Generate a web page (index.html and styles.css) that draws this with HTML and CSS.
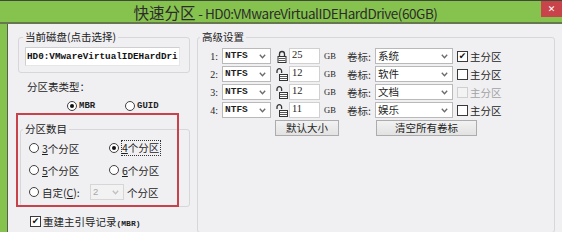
FILE: index.html
```html
<!DOCTYPE html>
<html lang="zh-CN">
<head>
<meta charset="utf-8">
<title>快速分区</title>
<link rel="stylesheet" href="styles.css">
</head>
<body>
<div class="window">
  <div class="titlebar">
    <div class="title"><span class="t-cjk">快速分区</span><span class="t-lat"> - HD0:VMwareVirtualIDEHardDrive(60GB)</span></div>
    <div class="close">&#x2715;</div>
  </div>
  <div class="frame">
    <div class="left">
      <fieldset class="group disk">
        <legend>当前磁盘(点击选择)</legend>
        <div class="disk-field">HD0:VMwareVirtualIDEHardDri</div>
      </fieldset>
      <div class="pt-label">分区表类型：</div>
      <div class="pt-row">
        <div class="pt-opt"><span class="radio on"></span><span class="latin">MBR</span></div>
        <div class="pt-opt"><span class="radio"></span><span class="latin">GUID</span></div>
      </div>
      <fieldset class="group count">
        <legend>分区数目</legend>
        <div class="count-rows">
          <div class="crow">
            <div class="opt"><span class="radio"></span><span><u>3</u>个分区</span></div>
            <div class="opt"><span class="radio on"></span><span class="focus"><u>4</u>个分区</span></div>
          </div>
          <div class="crow">
            <div class="opt"><span class="radio"></span><span><u>5</u>个分区</span></div>
            <div class="opt"><span class="radio"></span><span><u>6</u>个分区</span></div>
          </div>
          <div class="crow">
            <span class="radio"></span><span class="custom">自定(<u>C</u>):</span>
            <div class="sel dis"><span class="sel-text">2</span><svg class="chev" width="7" height="5" viewBox="0 0 7 5"><polyline points="0.8,0.8 3.5,3.8 6.2,0.8" fill="none" stroke="#c0c0c0" stroke-width="1.3"/></svg></div>
            <span class="unit">个分区</span>
          </div>
        </div>
      </fieldset>
      <div class="check-row"><span class="check on">&#10004;</span><span>重建主引导记录<span class="latin small">(MBR)</span></span></div>
      <div class="annot"></div>
    </div>
    <div class="right">
      <fieldset class="group adv">
        <legend>高级设置</legend>
        <div class="adv-rows">
          <div class="arow">
            <span class="num">1:</span>
            <div class="sel fs"><span class="sel-text latin">NTFS</span><svg class="chev" width="7" height="5" viewBox="0 0 7 5"><polyline points="0.8,0.8 3.5,3.8 6.2,0.8" fill="none" stroke="#6a6a6a" stroke-width="1.3"/></svg></div>
            <svg class="lock" width="12" height="13" viewBox="0 0 12 13"><path d="M3.5 6.5 V4 a2.5 2.5 0 0 1 5 0 V6.5" fill="none" stroke="#333" stroke-width="1.3"/><rect x="2" y="6.5" width="8" height="6" fill="#fff" stroke="#333"/><line x1="2.5" y1="8.5" x2="9.5" y2="8.5" stroke="#555"/><line x1="2.5" y1="10.5" x2="9.5" y2="10.5" stroke="#555"/></svg>
            <div class="field">25</div>
            <span class="gb">GB</span>
            <span class="vl">卷标:</span>
            <div class="sel vol"><span class="sel-text">系统</span><svg class="chev" width="7" height="5" viewBox="0 0 7 5"><polyline points="0.8,0.8 3.5,3.8 6.2,0.8" fill="none" stroke="#6a6a6a" stroke-width="1.3"/></svg></div>
            <span class="check on">&#10004;</span><span>主分区</span>
          </div>
          <div class="arow">
            <span class="num">2:</span>
            <div class="sel fs"><span class="sel-text latin">NTFS</span><svg class="chev" width="7" height="5" viewBox="0 0 7 5"><polyline points="0.8,0.8 3.5,3.8 6.2,0.8" fill="none" stroke="#6a6a6a" stroke-width="1.3"/></svg></div>
            <svg class="lock" width="12" height="13" viewBox="0 0 12 13"><path d="M1 5 V3 a2.3 2.3 0 0 1 4.6 0 V5" fill="none" stroke="#333" stroke-width="1.3"/><rect x="3.5" y="6.5" width="8" height="6" fill="#fff" stroke="#333"/><line x1="4" y1="8.5" x2="11" y2="8.5" stroke="#555"/><line x1="4" y1="10.5" x2="11" y2="10.5" stroke="#555"/></svg>
            <div class="field">12</div>
            <span class="gb">GB</span>
            <span class="vl">卷标:</span>
            <div class="sel vol"><span class="sel-text">软件</span><svg class="chev" width="7" height="5" viewBox="0 0 7 5"><polyline points="0.8,0.8 3.5,3.8 6.2,0.8" fill="none" stroke="#6a6a6a" stroke-width="1.3"/></svg></div>
            <span class="check"></span><span>主分区</span>
          </div>
          <div class="arow">
            <span class="num">3:</span>
            <div class="sel fs"><span class="sel-text latin">NTFS</span><svg class="chev" width="7" height="5" viewBox="0 0 7 5"><polyline points="0.8,0.8 3.5,3.8 6.2,0.8" fill="none" stroke="#6a6a6a" stroke-width="1.3"/></svg></div>
            <svg class="lock" width="12" height="13" viewBox="0 0 12 13"><path d="M1 5 V3 a2.3 2.3 0 0 1 4.6 0 V5" fill="none" stroke="#333" stroke-width="1.3"/><rect x="3.5" y="6.5" width="8" height="6" fill="#fff" stroke="#333"/><line x1="4" y1="8.5" x2="11" y2="8.5" stroke="#555"/><line x1="4" y1="10.5" x2="11" y2="10.5" stroke="#555"/></svg>
            <div class="field">12</div>
            <span class="gb">GB</span>
            <span class="vl">卷标:</span>
            <div class="sel vol"><span class="sel-text">文档</span><svg class="chev" width="7" height="5" viewBox="0 0 7 5"><polyline points="0.8,0.8 3.5,3.8 6.2,0.8" fill="none" stroke="#6a6a6a" stroke-width="1.3"/></svg></div>
            <span class="check dis"></span><span class="dis-text">主分区</span>
          </div>
          <div class="arow">
            <span class="num">4:</span>
            <div class="sel fs"><span class="sel-text latin">NTFS</span><svg class="chev" width="7" height="5" viewBox="0 0 7 5"><polyline points="0.8,0.8 3.5,3.8 6.2,0.8" fill="none" stroke="#6a6a6a" stroke-width="1.3"/></svg></div>
            <svg class="lock" width="12" height="13" viewBox="0 0 12 13"><path d="M1 5 V3 a2.3 2.3 0 0 1 4.6 0 V5" fill="none" stroke="#333" stroke-width="1.3"/><rect x="3.5" y="6.5" width="8" height="6" fill="#fff" stroke="#333"/><line x1="4" y1="8.5" x2="11" y2="8.5" stroke="#555"/><line x1="4" y1="10.5" x2="11" y2="10.5" stroke="#555"/></svg>
            <div class="field">11</div>
            <span class="gb">GB</span>
            <span class="vl">卷标:</span>
            <div class="sel vol"><span class="sel-text">娱乐</span><svg class="chev" width="7" height="5" viewBox="0 0 7 5"><polyline points="0.8,0.8 3.5,3.8 6.2,0.8" fill="none" stroke="#6a6a6a" stroke-width="1.3"/></svg></div>
            <span class="check"></span><span>主分区</span>
          </div>
          <div class="brow">
            <div class="btn b1">默认大小</div>
            <div class="btn b2">清空所有卷标</div>
          </div>
        </div>
      </fieldset>
    </div>
  </div>
</div>
</body>
</html>
```

FILE: styles.css
```css
* { box-sizing: border-box; }
html, body { margin: 0; padding: 0; }
body {
  width: 562px;
  height: 232px;
  overflow: hidden;
  background: #f0eff2;
  font-family: "Noto Sans CJK SC", "Noto Sans", sans-serif;
  font-size: 10.5px;
  color: #1e1e1e;
}
.window { width: 562px; height: 232px; display: flex; flex-direction: column; overflow: hidden; }

.titlebar {
  height: 24px;
  flex: none;
  background: #86c24e;
  border-top: 1px solid #3e4a36;
  border-bottom: 2px solid #66784f;
  display: flex;
  align-items: flex-start;
}
.title {
  flex: 1;
  text-align: center;
  padding-left: 30px;
  margin-top: 2px;
  line-height: 19px;
  color: #2c2c2c;
  white-space: nowrap;
}
.t-cjk { font-size: 15.5px; }
.t-lat { font-size: 13.5px; letter-spacing: -0.45px; }
.close {
  width: 21px;
  height: 16px;
  background: #c9434b;
  color: #fff;
  font-family: "DejaVu Sans", sans-serif;
  font-size: 9px;
  line-height: 16px;
  text-align: center;
}

.frame {
  flex: 1;
  display: flex;
  border-left: 7px solid #86c24e;
  padding-left: 1px;
  box-shadow: inset 1px 0 0 #56634b;
  overflow: hidden;
}
.left { width: 189px; flex: none; position: relative; }
.right { flex: 1; }

.group {
  margin: 0;
  padding: 0;
  border: 1px solid #d8d6da;
  border-radius: 3px;
  min-width: 0;
}
.group legend {
  padding: 0 2px;
  line-height: 14px;
  color: #222;
}

.disk { margin: 6px 7px 0 10px; padding-bottom: 6px; }
.disk legend { margin-left: 4px; }
.disk-field {
  margin: 3px 0 0 6px;
  width: 155px;
  height: 19px;
  background: #fff;
  border: 1px solid #cfcfcf;
  border-right-color: #e6e6e6;
  border-bottom-color: #e6e6e6;
  padding-left: 1px;
  font-family: "Liberation Mono", monospace;
  font-weight: bold;
  font-size: 9.3px;
  line-height: 17px;
  color: #111;
  white-space: nowrap;
  overflow: hidden;
}
.latin { font-family: "Liberation Mono", monospace; font-weight: bold; font-size: 9px; }
.latin.small { font-size: 8px; }

.pt-label { margin: 7px 0 0 19px; line-height: 14px; }
.pt-row { margin-top: 5px; height: 14px; display: flex; align-items: center; padding-left: 59px; }
.pt-opt { display: flex; align-items: center; width: 58px; }

.radio {
  width: 10px;
  height: 10px;
  flex: none;
  border: 1px solid #404040;
  border-radius: 50%;
  background: #fff;
  margin-right: 2px;
  display: flex;
  align-items: center;
  justify-content: center;
}
.radio.on::after {
  content: "";
  width: 4px;
  height: 4px;
  border-radius: 50%;
  background: #111;
}

.count { margin: 9px 7px 0 12px; padding-bottom: 6px; }
.count legend { margin-left: 2px; }
.count-rows { padding: 4px 0 0 8px; display: flex; flex-direction: column; gap: 6px; }
.crow { height: 16px; display: flex; align-items: center; }
.opt { width: 82px; display: flex; align-items: center; }
.crow .radio { margin-right: 3px; }
.focus { outline: 1px dotted #333; outline-offset: 0; padding: 0 1px 0 0; line-height: 14px; }
.custom { width: 48px; }
.unit { margin-left: 3px; }

.sel {
  height: 16px;
  background: #fff;
  border: 1px solid #b9b9b9;
  display: flex;
  align-items: center;
}
.sel-text { flex: 1; padding-left: 2px; line-height: 14px; white-space: nowrap; }
.chev { margin-right: 4px; flex: none; }
.sel.dis { width: 34px; background: #f2f2f2; border-color: #d6d6d6; color: #a8a8a8; }
.sel.dis .sel-text { font-family: "Liberation Sans", sans-serif; font-size: 9.5px; }

.check-row { margin-top: 7px; height: 14px; display: flex; align-items: center; padding-left: 22px; }
.check {
  width: 11px;
  height: 11px;
  flex: none;
  border: 1px solid #3a3a3a;
  background: #fff;
  margin-right: 2px;
  font-family: "DejaVu Sans", sans-serif;
  font-size: 9px;
  line-height: 9px;
  text-align: center;
  color: #111;
}
.check.dis { border-color: #cfcfcf; background: #f3f3f3; }
.dis-text { color: #a2a2a2; }

.annot {
  position: absolute;
  left: 8px;
  top: 89px;
  width: 163px;
  height: 94px;
  border: 2px solid #c8424c;
}

.adv { margin: 6px 7px 0 0; height: 203px; }
.adv legend { margin-left: 2px; }
.adv-rows { padding-top: 4px; display: flex; flex-direction: column; gap: 2px; }
.arow { height: 16px; display: flex; align-items: center; }
.num {
  width: 21px;
  text-align: right;
  font-family: "Liberation Serif", serif;
  font-size: 10px;
  padding-right: 1px;
}
.sel.fs { width: 49px; margin-left: 3px; }
.sel.fs .sel-text { font-size: 9.5px; }
.lock { margin-left: 5px; margin-right: 1px; flex: none; }
.field {
  width: 31px;
  height: 16px;
  background: #fff;
  border: 1px solid #d0d0d0;
  padding-left: 2px;
  font-family: "Liberation Serif", serif;
  font-size: 10.5px;
  line-height: 12px;
}
.gb { margin-left: 4px; width: 12px; font-family: "Liberation Serif", serif; font-size: 8.5px; }
.vl { margin-left: 11px; width: 28px; color: #333; }
.sel.vol { width: 78px; }
.arow .check { margin-left: 4px; }

.brow { height: 16px; display: flex; align-items: center; padding-left: 77px; }
.btn {
  height: 16px;
  border: 1px solid #acacac;
  background: linear-gradient(#f2f2f2, #e2e2e2);
  text-align: center;
  line-height: 14px;
}
.b1 { width: 64px; }
.b2 { width: 101px; margin-left: 37px; }
```
